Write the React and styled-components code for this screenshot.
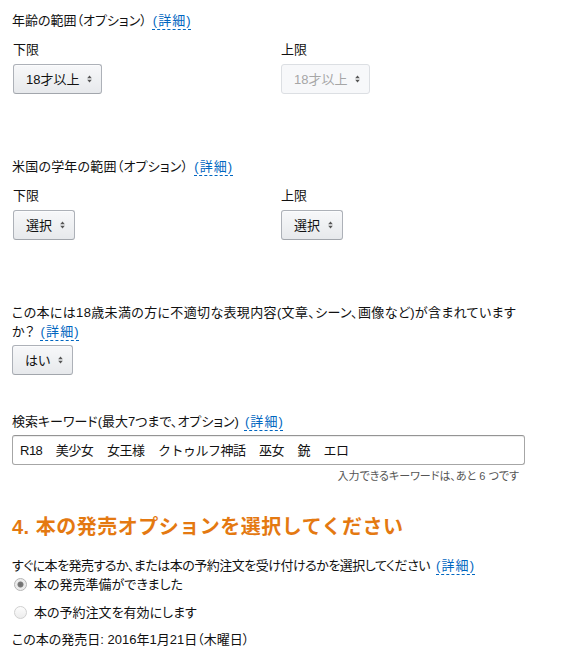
import React from "react";
import styled, { createGlobalStyle } from "styled-components";

const Global = createGlobalStyle`
  html, body { margin: 0; padding: 0; background: #fff; }
  body {
    font-family: "Liberation Sans", Arial, "Noto Sans CJK JP", sans-serif;
    font-size: 13px;
    color: #111;
  }
`;

const Page = styled.div`
  padding: 11px 12px 0 12px;
  line-height: 19px;
  font-feature-settings: "palt";
  letter-spacing: 0;
`;

const Section = styled.section`
  margin-top: ${(p) => p.$mt || 0}px;
`;

const Title = styled.div`
  line-height: 19px;
  white-space: nowrap;
  letter-spacing: ${(p) => p.$ls || 0}px;
`;

const Paragraph = styled.div`
  width: 520px;
  line-height: 19px;
  letter-spacing: 0.35px;
`;

const Help = styled.a`
  color: #0066c0;
  text-decoration: underline dashed #0066c0;
  text-decoration-thickness: 1px;
  text-underline-offset: 4px;
  margin-left: 6px;
  letter-spacing: 1.1px;
  cursor: pointer;
`;

const RangeGrid = styled.div`
  display: grid;
  grid-template-columns: 269px 1fr;
  margin-top: 10px;
`;

const Field = styled.div`
  display: flex;
  flex-direction: column;
  align-items: flex-start;
  padding-left: ${(p) => p.$indent || 0}px;
`;

const Label = styled.div`
  line-height: 19px;
  margin-bottom: 5px;
`;

const SelectBox = styled.div`
  box-sizing: border-box;
  height: 30px;
  display: inline-flex;
  align-items: center;
  gap: 8px;
  padding: 0 9px 0 12px;
  margin-top: ${(p) => p.$mt || 0}px;
  border-radius: 3px;
  border: 1px solid ${(p) => (p.$disabled ? "#dcdfe3" : "#adb1b8")};
  border-bottom-color: ${(p) => (p.$disabled ? "#dcdfe3" : "#a2a6ac")};
  background: ${(p) =>
    p.$disabled ? "#f7f8fa" : "linear-gradient(to bottom, #f7f8fa, #e7e9ec)"};
  color: ${(p) => (p.$disabled ? "#a6a6a6" : "#111")};
  box-shadow: ${(p) => (p.$disabled ? "none" : "0 1px 0 rgba(255,255,255,.6) inset")};
  white-space: nowrap;
`;

const Arrows = () => (
  <svg width="5" height="8" viewBox="0 0 5 8">
    <path d="M2.5 0.5 L4.8 3.2 L0.2 3.2 Z" fill="#555" />
    <path d="M2.5 7.5 L4.8 4.8 L0.2 4.8 Z" fill="#555" />
  </svg>
);

const Select = ({ value, disabled, mt }) => (
  <SelectBox $disabled={disabled} $mt={mt}>
    <span>{value}</span>
    <Arrows />
  </SelectBox>
);

const KeywordInput = styled.div`
  box-sizing: border-box;
  margin-top: 4px;
  width: 513px;
  height: 30px;
  border: 1px solid #a6a6a6;
  border-top-color: #949494;
  border-radius: 3px;
  box-shadow: 0 1px 0 rgba(0,0,0,.07) inset;
  display: flex;
  align-items: center;
  padding-left: 7px;
  gap: 13.5px;
  font-feature-settings: normal;
  letter-spacing: -0.5px;
`;

const Keyword = styled.span`
  white-space: nowrap;
`;

const Hint = styled.div`
  width: 507px;
  margin-top: 4px;
  font-size: 11px;
  line-height: 15px;
  color: #555;
  text-align: right;
`;

const Heading = styled.h2`
  margin: 29px 0 0 0;
  font-size: 20px;
  line-height: 28px;
  font-weight: bold;
  color: #e47911;
  font-feature-settings: normal;
  letter-spacing: 0.5px;
`;

const Description = styled.div`
  margin-top: 15px;
  line-height: 19px;
  letter-spacing: -0.5px;
`;

const RadioRow = styled.label`
  display: flex;
  align-items: center;
  gap: 7px;
  line-height: 19px;
  margin-top: ${(p) => p.$mt || 0}px;
  padding-left: 2px;
`;

const RadioCircle = styled.span`
  box-sizing: border-box;
  width: 13px;
  height: 13px;
  border-radius: 50%;
  border: 1px solid ${(p) => (p.$checked ? "#b5b5b5" : "#d0d0d0")};
  background: ${(p) =>
    p.$checked
      ? "radial-gradient(circle, #6f6f6f 0, #7a7a7a 2.6px, #e9e9e9 3.4px, #f2f2f2 100%)"
      : "linear-gradient(to bottom, #fdfdfd, #ececec)"};
  flex: none;
`;

const DateLine = styled.div`
  margin-top: 8px;
  line-height: 19px;
`;

export default function App() {
  return (
    <>
      <Global />
      <Page>
        <Section>
          <Title>
            年齢の範囲（オプション）<Help>(詳細)</Help>
          </Title>
          <RangeGrid>
            <Field $indent={1}>
              <Label>下限</Label>
              <Select value="18才以上" />
            </Field>
            <Field>
              <Label>上限</Label>
              <Select value="18才以上" disabled />
            </Field>
          </RangeGrid>
        </Section>

        <Section $mt={63}>
          <Title $ls={0.2}>
            米国の学年の範囲（オプション）<Help>(詳細)</Help>
          </Title>
          <RangeGrid>
            <Field $indent={1}>
              <Label>下限</Label>
              <Select value="選択" />
            </Field>
            <Field>
              <Label>上限</Label>
              <Select value="選択" />
            </Field>
          </RangeGrid>
        </Section>

        <Section $mt={63}>
          <Paragraph>
            この本には18歳未満の方に不適切な表現内容(文章、シーン、画像など)が含まれています
            <br />
            か？<Help>(詳細)</Help>
          </Paragraph>
          <Select value="はい" mt={4} />
        </Section>

        <Section $mt={37}>
          <Title>
            検索キーワード(最大7つまで、オプション)<Help>(詳細)</Help>
          </Title>
          <KeywordInput>
            {["R18", "美少女", "女王様", "クトゥルフ神話", "巫女", "銃", "エロ"].map((k) => (
              <Keyword key={k}>{k}</Keyword>
            ))}
          </KeywordInput>
          <Hint>入力できるキーワードは、あと 6 つです</Hint>
        </Section>

        <Heading>4. 本の発売オプションを選択してください</Heading>
        <Description>
          すぐに本を発売するか、または本の予約注文を受け付けるかを選択してください<Help>(詳細)</Help>
        </Description>
        <RadioRow>
          <RadioCircle $checked />
          本の発売準備ができました
        </RadioRow>
        <RadioRow $mt={9}>
          <RadioCircle />
          本の予約注文を有効にします
        </RadioRow>
        <DateLine>この本の発売日: 2016年1月21日（木曜日）</DateLine>
      </Page>
    </>
  );
}
